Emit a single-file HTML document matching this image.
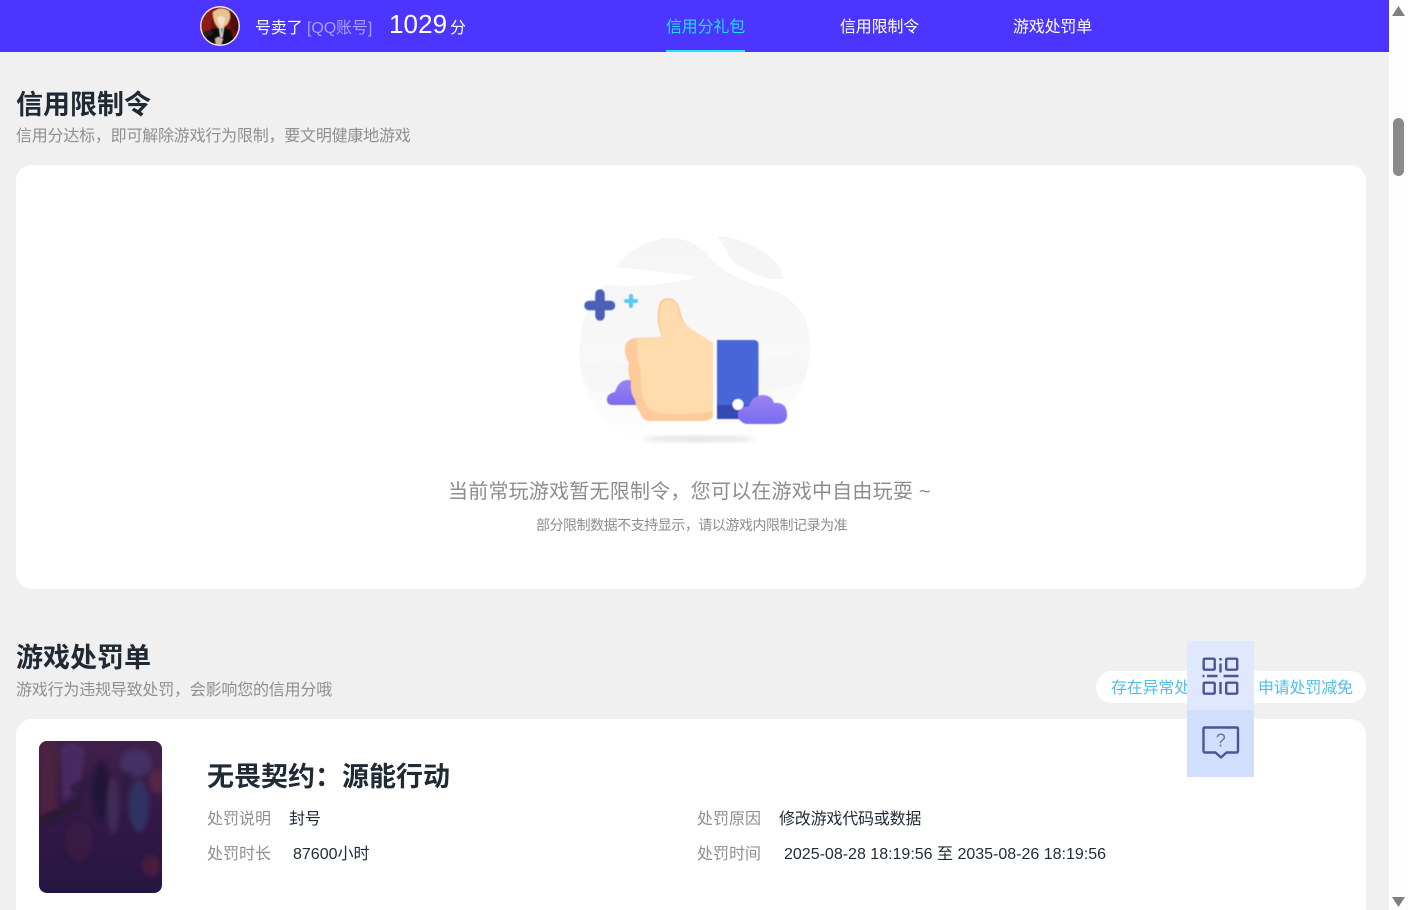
<!DOCTYPE html>
<html lang="zh">
<head>
<meta charset="utf-8">
<style>
html,body{margin:0;padding:0;width:1408px;height:910px;overflow:hidden;background:#f0f0f0;font-family:"Liberation Sans","Noto Sans CJK SC",sans-serif;}
.a{position:absolute;white-space:nowrap;line-height:1;}
#page{position:relative;width:1408px;height:910px;overflow:hidden;}
.card{position:absolute;background:#fff;border-radius:16px;}
</style>
</head>
<body>
<div id="page">
<div class="a" style="left:0;top:0;width:1389px;height:52px;background:#4c35ff"></div>

<svg class="a" style="left:200px;top:6px" width="40" height="40" viewBox="0 0 40 40">
<defs><clipPath id="av"><circle cx="20" cy="20" r="18.5"/></clipPath>
<filter id="b1"><feGaussianBlur stdDeviation="0.6"/></filter></defs>
<circle cx="20" cy="20" r="20" fill="#f1e8f3"/>
<g clip-path="url(#av)"><rect width="40" height="40" fill="#6e120e"/>
<g filter="url(#b1)">
<path d="M0 0H14L10 24L0 26Z" fill="#8e1a12"/>
<path d="M28 0H40V26L32 24Z" fill="#4c100d"/>
<path d="M13 6Q20 -1 29 5Q32 12 27 19L23 22H18Q12 15 13 6Z" fill="#e6c391"/>
<path d="M17 11Q22 9 25 12Q25 18 22 21Q18 19 17 11Z" fill="#f5dfcd"/>
<path d="M8 25Q19 19 31 24L35 40H5Z" fill="#100d0f"/>
<path d="M19 21L24 21L22.500 31H20.500Z" fill="#e8e0e0"/>
<path d="M21 22H22.500L21.700 30Z" fill="#222"/>
<path d="M1 28L12 24L13 28L3 33Z" fill="#2a1a1a"/>
<path d="M15 33Q19 29 23 33L21 39H16Z" fill="#cfae9e"/>
</g></g>
</svg>

<div class="a" style="left:255px;top:21px;font-size:16px;color:#fff;letter-spacing:-.2px">号卖了</div>
<div class="a" style="left:307px;top:21px;font-size:16px;color:#a99fff;letter-spacing:-.1px">[QQ账号]</div>
<div class="a" style="left:389px;top:11px;font-size:26px;color:#fff;letter-spacing:.1px">1029</div>
<div class="a" style="left:450px;top:21px;font-size:16px;color:#fff">分</div>

<div class="a" style="left:666px;top:20px;font-size:16px;color:#22ddf5;letter-spacing:-.2px">信用分礼包</div>
<div class="a" style="left:666px;top:50px;width:79px;height:2px;background:#22e6ff"></div>
<div class="a" style="left:840px;top:20px;font-size:16px;color:#fff;letter-spacing:-.2px">信用限制令</div>
<div class="a" style="left:1013px;top:20px;font-size:16px;color:#fff;letter-spacing:-.2px">游戏处罚单</div>

<div class="a" style="left:16px;top:92px;font-size:27px;font-weight:700;color:#1f2a35">信用限制令</div>
<div class="a" style="left:16px;top:129px;font-size:16px;color:#8f8f8f;letter-spacing:-.22px">信用分达标，即可解除游戏行为限制，要文明健康地游戏</div>

<div class="card" style="left:16px;top:165px;width:1350px;height:424px"></div>

<svg class="a" style="left:560px;top:225px" width="270" height="235" viewBox="0 0 270 235">
<defs>
<linearGradient id="bg" x1="0" y1="0" x2="0" y2="1"><stop offset="0" stop-color="#f5f5f6"/><stop offset=".6" stop-color="#f8f8f9"/><stop offset="1" stop-color="#fff"/></linearGradient>
<linearGradient id="cl" x1="0" y1="0" x2="0" y2="1"><stop offset="0" stop-color="#9b82f2"/><stop offset="1" stop-color="#7a6cf0"/></linearGradient>
<filter id="s"><feGaussianBlur stdDeviation="2.2"/></filter>
<filter id="s2"><feGaussianBlur stdDeviation=".4"/></filter>
</defs>
<path d="M56 42Q78 14 112 13Q134 14 150 32Q166 50 195 60Q232 66 246 96Q254 122 246 150Q230 196 172 218Q130 234 92 222Q42 206 26 166Q16 142 21 110Q24 78 44 60Q90 64 138 52Q100 46 56 42Z" fill="url(#bg)"/>
<path d="M157 11Q180 12 202 26Q222 38 223 54Q205 56 188 45Q172 40 168 28Q162 18 157 11Z" fill="#f5f5f6"/>
<path d="M22 142Q50 132 70 140L80 170L30 165ZM195 136Q220 130 248 136L246 155L200 170Z" fill="#f4f4f6" opacity=".5"/>
<ellipse cx="139" cy="214" rx="56" ry="3.500" fill="#e6e6e8" filter="url(#s)"/>
<g filter="url(#s2)">
<g stroke="#4b5fb8" stroke-linecap="round" fill="none">
<path d="M40 69V91" stroke-width="9.500"/>
<path d="M29 80.500H50.500" stroke-width="9.500"/>
</g>
<g stroke="#5cc6f5" stroke-linecap="round" fill="none">
<path d="M71 71V81" stroke-width="4"/>
<path d="M66 76H76" stroke-width="4"/>
</g>
<path d="M47 176Q46 169 55 167Q59 154 70 155Q80 157 82 168L84 180H52Q48 180 47 176Z" fill="url(#cl)"/>
<path d="M102 112C98 102 97 94 98 86C98 78 102 73 108 73C115 73 119 79 120 85C122 94 124 98 128 102L153 118V192Q150 196 140 196H92Q83 197 80 188Q76 182 75 175Q70 168 71 157Q67 148 69 138Q64 130 65 123Q66 114 75 113Z" fill="#fdcb9a"/>
<path d="M103 112C100 102 99 94 100 87C100 79 103 75 108 75C114 75 118 80 118 86C120 95 123 99 128 102L153 118V186Q130 190 108 189Q92 188 86 180Q81 170 81 158Q82 150 79 138Q77 128 77 114Z" fill="#ffdcae"/>
<path d="M157 115H194Q198.500 115 198.500 120V194H157Z" fill="#4a66d8"/>
<path d="M157 180H198.500V194H157Z" fill="#3449b5"/>
<circle cx="178" cy="179.500" r="5.500" fill="#fff"/>
<path d="M186 199Q177 196 178 188Q181 181 189 181Q193 170 204 170Q212 171 214 178Q226 177 227 188Q228 199 216 199Z" fill="url(#cl)"/>
</g>
</svg>

<div class="a" style="left:448px;top:482px;font-size:20px;color:#8d8d8d;letter-spacing:.22px">当前常玩游戏暂无限制令，您可以在游戏中自由玩耍 ~</div>
<div class="a" style="left:536px;top:518px;font-size:14px;color:#8d8d8d;letter-spacing:-.47px">部分限制数据不支持显示，请以游戏内限制记录为准</div>

<div class="a" style="left:16px;top:645px;font-size:27px;font-weight:700;color:#1f2a35">游戏处罚单</div>
<div class="a" style="left:16px;top:683px;font-size:16px;color:#8f8f8f;letter-spacing:-.2px">游戏行为违规导致处罚，会影响您的信用分哦</div>

<div class="a" style="left:1096px;top:671px;width:270px;height:32px;background:#fff;border-radius:16px"></div>
<div class="a" style="left:1111px;top:681px;font-size:16px;color:#4fbfe8;letter-spacing:-.2px">存在异常处罚</div>
<div class="a" style="left:1258px;top:681px;font-size:16px;color:#4fbfe8;letter-spacing:-.2px">申请处罚减免</div>

<div class="card" style="left:16px;top:719px;width:1350px;height:220px"></div>

<svg class="a" style="left:39px;top:741px" width="123" height="152" viewBox="0 0 123 152">
<defs>
<clipPath id="g"><rect width="123" height="152" rx="8"/></clipPath>
<filter id="b"><feGaussianBlur stdDeviation="2.2"/></filter>
<linearGradient id="gg" x1="0" y1="0" x2="0" y2="1"><stop offset="0" stop-color="#40204a"/><stop offset=".55" stop-color="#321846"/><stop offset="1" stop-color="#261542"/></linearGradient>
</defs>
<g clip-path="url(#g)">
<rect width="123" height="152" fill="url(#gg)"/>
<g filter="url(#b)">
<path d="M0 0H18V70L0 80Z" fill="#4c2040"/>
<path d="M22 6Q34 -2 46 8L40 50L24 60Z" fill="#4a2c60"/>
<ellipse cx="97" cy="22" rx="16" ry="14" fill="#43336a" opacity=".8"/>
<ellipse cx="100" cy="65" rx="10" ry="26" fill="#30386c" opacity=".8"/>
<ellipse cx="118" cy="40" rx="8" ry="13" fill="#542645"/>
<ellipse cx="112" cy="125" rx="9" ry="11" fill="#461c3c"/>
<ellipse cx="62" cy="50" rx="9" ry="30" fill="#241838"/>
<ellipse cx="40" cy="100" rx="14" ry="20" fill="#3d1f44" opacity=".7"/>
<path d="M0 75L40 58L42 66L0 88Z" fill="#241731" opacity=".7"/>
<ellipse cx="74" cy="65" rx="6" ry="28" fill="#44325c" opacity=".7"/>
<path d="M30 45L50 35L55 42L35 56Z" fill="#2a1a3a" opacity=".7"/>
<path d="M85 30L92 32L88 60L82 58Z" fill="#2c1c42"/>
</g></g>
</svg>

<div class="a" style="left:207px;top:764px;font-size:27px;font-weight:700;color:#1f2a35">无畏契约：源能行动</div>

<div class="a" style="left:207px;top:812px;font-size:16px;color:#8f8f8f">处罚说明</div>
<div class="a" style="left:289px;top:812px;font-size:16px;color:#1f2a35">封号</div>
<div class="a" style="left:207px;top:847px;font-size:16px;color:#8f8f8f">处罚时长</div>
<div class="a" style="left:293px;top:847px;font-size:16px;color:#1f2a35">87600小时</div>
<div class="a" style="left:697px;top:812px;font-size:16px;color:#8f8f8f">处罚原因</div>
<div class="a" style="left:779px;top:812px;font-size:16px;color:#1f2a35;letter-spacing:-.2px">修改游戏代码或数据</div>
<div class="a" style="left:697px;top:847px;font-size:16px;color:#8f8f8f">处罚时间</div>
<div class="a" style="left:784px;top:847px;font-size:16px;color:#1f2a35">2025-08-28 18:19:56 至 2035-08-26 18:19:56</div>

<div class="a" style="left:1187px;top:641px;width:67px;height:69px;background:#e0e8fd"></div>
<div class="a" style="left:1187px;top:710px;width:67px;height:67px;background:#d0dffc"></div>
<svg class="a" style="left:1187px;top:641px" width="67" height="136" viewBox="0 0 67 136" fill="none" stroke="#4e5596" stroke-width="2.400">
<rect x="16.700" y="17.700" width="11" height="11" rx="1"/>
<rect x="39.200" y="17.700" width="11" height="11" rx="1"/>
<rect x="16.700" y="41.700" width="11" height="11" rx="1"/>
<rect x="39.200" y="41.700" width="11" height="11" rx="1"/>
<path d="M33.500 17V19.500M33.500 22.500V31.500M15.500 35H17.500M20 35H30.500M36.500 35H51.500M33.500 41V53"/>
<path d="M18 86.500H49.500Q51 86.500 51 88V110Q51 111.500 49.500 111.500H39.500L34 116.500L28.500 111.500H18Q16.500 111.500 16.500 110V88Q16.500 86.500 18 86.500Z" stroke-linejoin="round"/>
<text x="33.800" y="105.500" text-anchor="middle" font-family="Liberation Sans,sans-serif" font-size="18" fill="#6e74a6" stroke="none">?</text>
</svg>

<div class="a" style="left:1389px;top:0;width:19px;height:910px;background:#fdfdfd"></div>
<div class="a" style="left:1393px;top:118px;width:11px;height:58px;background:#8a8a8a;border-radius:6px"></div>
<svg class="a" style="left:1389px;top:0" width="19" height="910" viewBox="0 0 19 910" fill="#7f7f7f">
<path d="M9.500 6L16 16H3Z"/>
<path d="M3 897H16L9.500 907Z"/>
</svg>
</div>
</body>
</html>
